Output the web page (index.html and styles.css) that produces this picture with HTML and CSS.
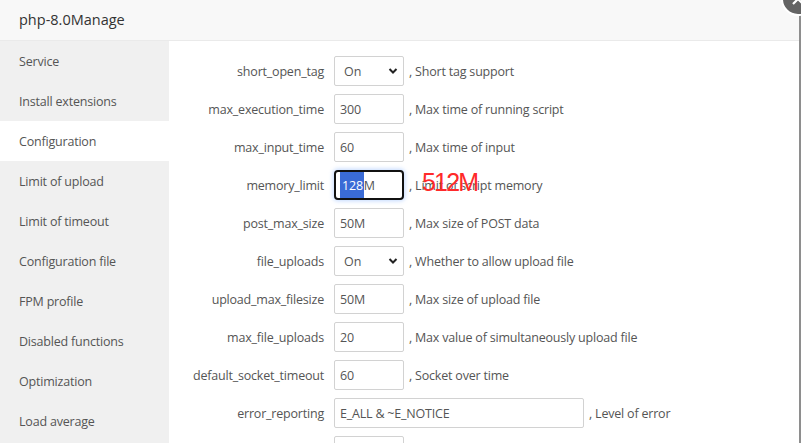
FILE: index.html
```html
<!DOCTYPE html>
<html>
<head>
<meta charset="utf-8">
<link rel="stylesheet" href="styles.css">
</head>
<body>
<div class="page">
  <div class="modal">
    <div class="header">php-8.0Manage</div>
    <div class="body">
      <ul class="nav">
        <li>Service</li>
        <li>Install extensions</li>
        <li class="active">Configuration</li>
        <li>Limit of upload</li>
        <li>Limit of timeout</li>
        <li>Configuration file</li>
        <li>FPM profile</li>
        <li>Disabled functions</li>
        <li>Optimization</li>
        <li>Load average</li>
      </ul>
      <div class="content">
        <div class="row">
          <span class="label">short_open_tag</span>
          <span class="select"><select><option>On</option><option>Off</option></select><svg class="chev" width="10" height="8" viewBox="0 0 10 8"><path d="M1.5 2 L5 5.5 L8.5 2" fill="none" stroke="#222" stroke-width="2"/></svg></span>
          <span class="desc">, Short tag support</span>
        </div>
        <div class="row">
          <span class="label">max_execution_time</span>
          <input class="field" type="text" value="300">
          <span class="desc">, Max time of running script</span>
        </div>
        <div class="row">
          <span class="label">max_input_time</span>
          <input class="field" type="text" value="60">
          <span class="desc">, Max time of input</span>
        </div>
        <div class="row">
          <span class="label">memory_limit</span>
          <span class="field focus"><span class="selected">128</span>M</span>
          <span class="desc">, Limit of script memory</span>
          <span class="note">512M</span>
        </div>
        <div class="row">
          <span class="label">post_max_size</span>
          <input class="field" type="text" value="50M">
          <span class="desc">, Max size of POST data</span>
        </div>
        <div class="row">
          <span class="label">file_uploads</span>
          <span class="select"><select><option>On</option><option>Off</option></select><svg class="chev" width="10" height="8" viewBox="0 0 10 8"><path d="M1.5 2 L5 5.5 L8.5 2" fill="none" stroke="#222" stroke-width="2"/></svg></span>
          <span class="desc">, Whether to allow upload file</span>
        </div>
        <div class="row">
          <span class="label">upload_max_filesize</span>
          <input class="field" type="text" value="50M">
          <span class="desc">, Max size of upload file</span>
        </div>
        <div class="row">
          <span class="label">max_file_uploads</span>
          <input class="field" type="text" value="20">
          <span class="desc">, Max value of simultaneously upload file</span>
        </div>
        <div class="row">
          <span class="label">default_socket_timeout</span>
          <input class="field" type="text" value="60">
          <span class="desc">, Socket over time</span>
        </div>
        <div class="row">
          <span class="label">error_reporting</span>
          <input class="field wide" type="text" value="E_ALL &amp; ~E_NOTICE">
          <span class="desc">, Level of error</span>
        </div>
        <div class="row">
          <span class="label"></span>
          <input class="field" type="text" value="">
        </div>
      </div>
    </div>
    <span class="close"><svg width="12" height="12" viewBox="0 0 12 12"><path d="M1 1 L11 11 M11 1 L1 11" stroke="#fff" stroke-width="2.2"/></svg></span>
  </div>
  <div class="edge"></div>
</div>
</body>
</html>
```

FILE: styles.css
```css
html, body {
  margin: 0;
  padding: 0;
  height: 100%;
  overflow: hidden;
}
body {
  font-family: "Open Sans", "Noto Sans", sans-serif;
  font-size: 12.5px;
  letter-spacing: -0.2px;
  color: #555;
  background: #fff;
}
.page {
  display: flex;
  height: 443px;
}
.modal {
  position: relative;
  width: 799px;
  flex: none;
  display: flex;
  flex-direction: column;
  background: #fff;
}
.edge {
  flex: 1;
  background: #8e8e8e;
}
.header {
  height: 40px;
  line-height: 40px;
  padding-left: 19px;
  font-size: 14.5px;
  letter-spacing: 0;
  color: #333;
  background: #f8f8f8;
  border-bottom: 1px solid #eaeaea;
  flex: none;
}
.body {
  display: flex;
  flex: 1;
  min-height: 0;
  overflow: hidden;
}
.nav {
  list-style: none;
  margin: 0;
  padding: 0;
  width: 169px;
  flex: none;
  background: #f0f0f0;
}
.nav li {
  box-sizing: border-box;
  height: 40px;
  line-height: 40px;
  padding: 1px 0 0 19px;
  overflow: hidden;
  color: #555;
}
.nav li.active {
  background: #fff;
}
.content {
  flex: 1;
  padding-top: 15px;
}
.row {
  position: relative;
  display: flex;
  align-items: center;
  height: 30px;
  margin-bottom: 8px;
}
.label {
  width: 155px;
  flex: none;
  text-align: right;
  margin-right: 10px;
  white-space: nowrap;
}
.field {
  box-sizing: border-box;
  width: 70px;
  height: 30px;
  border: 1px solid #d2d2d2;
  border-radius: 2px;
  padding: 0 5px;
  font-family: inherit;
  font-size: 12.5px;
  letter-spacing: -0.2px;
  color: #555;
  background: #fff;
  outline: none;
  flex: none;
}
.field.wide {
  width: 250px;
}
.field.focus {
  display: flex;
  align-items: center;
  border: 2px solid #111;
  border-radius: 4px;
  padding: 0 0 0 5px;
  box-shadow: 0 0 4px 1px rgba(120, 170, 255, 0.45);
  color: #555;
}
.selected {
  display: flex;
  align-items: center;
  height: 26px;
  padding: 0 1px 0 2px;
  margin-left: -1px;
  background: #3a6bd6;
  color: #fff;
}
.select {
  position: relative;
  width: 70px;
  height: 30px;
  flex: none;
}
.select select {
  box-sizing: border-box;
  width: 70px;
  height: 30px;
  appearance: none;
  -webkit-appearance: none;
  border: 1px solid #d2d2d2;
  border-radius: 2px;
  padding: 0 0 0 9px;
  font-family: inherit;
  font-size: 12.5px;
  color: #555;
  background: #fff;
  outline: none;
}
.chev {
  position: absolute;
  right: 6px;
  top: 11px;
  pointer-events: none;
}
.desc {
  margin-left: 5px;
  white-space: nowrap;
  color: #555;
}
.note {
  position: absolute;
  left: 253px;
  top: 0;
  font-family: "Liberation Sans", Arial, sans-serif;
  font-size: 25px;
  line-height: 25px;
  letter-spacing: -1.8px;
  color: #ff2a2a;
}
.close {
  position: absolute;
  right: -16px;
  top: -18px;
  width: 30px;
  height: 30px;
  border-radius: 50%;
  background: #646464;
  border: 2px solid #fff;
  display: flex;
  align-items: center;
  justify-content: center;
  z-index: 2;
}
```
